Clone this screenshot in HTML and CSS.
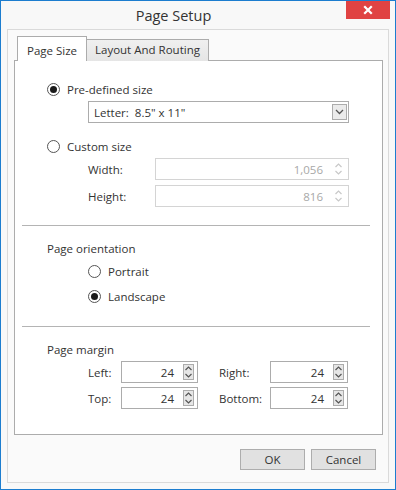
FILE: index.html
```html
<!DOCTYPE html>
<html>
<head>
<meta charset="utf-8">
<link rel="stylesheet" href="styles.css">
</head>
<body>
<div class="window">
  <div class="titlebar">
    <div class="title">Page Setup</div>
    <div class="close">
      <svg width="10" height="10" viewBox="0 0 10 10"><path d="M2 2 L8 8 M8 2 L2 8" stroke="#fff" stroke-width="2.2" stroke-linecap="square"/></svg>
    </div>
  </div>
  <div class="frame">
    <div class="tabs">
      <div class="tab active">Page Size</div>
      <div class="tab">Layout And Routing</div>
    </div>
    <div class="panel">
      <div class="section s1">
        <div class="radio-row"><span class="radio checked"></span><span>Pre-defined size</span></div>
        <div class="combo">
          <span class="combo-text">Letter:&nbsp; 8.5" x 11"</span>
          <span class="combo-btn"><svg width="9" height="6" viewBox="0 0 9 6"><path d="M1 1 L4.5 4.5 L8 1" fill="none" stroke="#555" stroke-width="1.3"/></svg></span>
        </div>
        <div class="radio-row custom"><span class="radio"></span><span>Custom size</span></div>
        <div class="field-row r1">
          <span class="field-label">Width:</span>
          <div class="input disabled"><span class="val">1,056</span><span class="spin light"><svg width="9" height="14" viewBox="0 0 9 14"><path d="M1.5 5 L4.5 2 L7.5 5 M1.5 9 L4.5 12 L7.5 9" fill="none" stroke="#c8c8c8" stroke-width="1.2"/></svg></span></div>
        </div>
        <div class="field-row r2">
          <span class="field-label">Height:</span>
          <div class="input disabled"><span class="val">816</span><span class="spin light"><svg width="9" height="14" viewBox="0 0 9 14"><path d="M1.5 5 L4.5 2 L7.5 5 M1.5 9 L4.5 12 L7.5 9" fill="none" stroke="#c8c8c8" stroke-width="1.2"/></svg></span></div>
        </div>
      </div>
      <div class="section s2">
        <div class="label-row">Page orientation</div>
        <div class="radio-row indent"><span class="radio"></span><span>Portrait</span></div>
        <div class="radio-row indent land"><span class="radio checked"></span><span>Landscape</span></div>
      </div>
      <div class="section s3">
        <div class="label-row">Page margin</div>
        <div class="margin-grid">
          <span class="m-label">Left:</span>
          <div class="input small"><span class="val">24</span><span class="spin box"><svg width="9" height="14" viewBox="0 0 9 14"><path d="M1.5 5 L4.5 2 L7.5 5 M1.5 9 L4.5 12 L7.5 9" fill="none" stroke="#555" stroke-width="1.2"/></svg></span></div>
          <span class="m-label right">Right:</span>
          <div class="input small"><span class="val">24</span><span class="spin box"><svg width="9" height="14" viewBox="0 0 9 14"><path d="M1.5 5 L4.5 2 L7.5 5 M1.5 9 L4.5 12 L7.5 9" fill="none" stroke="#555" stroke-width="1.2"/></svg></span></div>
          <span class="m-label">Top:</span>
          <div class="input small"><span class="val">24</span><span class="spin box"><svg width="9" height="14" viewBox="0 0 9 14"><path d="M1.5 5 L4.5 2 L7.5 5 M1.5 9 L4.5 12 L7.5 9" fill="none" stroke="#555" stroke-width="1.2"/></svg></span></div>
          <span class="m-label right">Bottom:</span>
          <div class="input small"><span class="val">24</span><span class="spin box"><svg width="9" height="14" viewBox="0 0 9 14"><path d="M1.5 5 L4.5 2 L7.5 5 M1.5 9 L4.5 12 L7.5 9" fill="none" stroke="#555" stroke-width="1.2"/></svg></span></div>
        </div>
      </div>
    </div>
    <div class="buttons">
      <div class="btn">OK</div>
      <div class="btn">Cancel</div>
    </div>
  </div>
</div>
</body>
</html>
```
FILE: styles.css
```css
* { box-sizing: border-box; }
html, body { margin: 0; padding: 0; }
body {
  font-family: "Open Sans", "Noto Sans", sans-serif;
  font-size: 11.5px;
  color: #333;
  background: #fff;
}
.window {
  width: 396px;
  height: 490px;
  border: 1px solid #1c7dcf;
  background: #f8f8f8;
  display: flex;
  flex-direction: column;
}
.titlebar {
  height: 28px;
  display: flex;
  flex-shrink: 0;
}
.title {
  flex: 1;
  text-align: center;
  font-size: 14.5px;
  line-height: 28px;
  color: #333;
  padding-top: 1px;
}
.close {
  width: 44px;
  height: 18px;
  background: #e04343;
  margin-right: 5px;
  display: flex;
  align-items: center;
  justify-content: center;
}
.frame {
  flex: 1;
  margin: 0 6px 6px 6px;
  border: 1px solid #dadada;
  background: #fafafa;
  padding: 6px 5px 12px 6px;
  display: flex;
  flex-direction: column;
}
.tabs {
  display: flex;
  align-items: flex-end;
  padding-left: 3px;
  height: 25px;
  position: relative;
  z-index: 1;
  margin-bottom: -1px;
}
.tab {
  height: 22px;
  border: 1px solid #acacac;
  border-bottom: none;
  background: linear-gradient(#f0f0f0, #e5e5e5);
  padding: 0 8px;
  line-height: 20px;
  color: #333;
  margin-left: -1px;
  white-space: nowrap;
}
.tab.active {
  height: 25px;
  background: #fff;
  margin-left: 0;
  width: 70px;
  line-height: 27px;
  position: relative;
  z-index: 2;
  padding: 0;
  text-align: center;
}
.panel {
  flex: 1;
  background: #fff;
  border: 1px solid #acacac;
  padding: 0 12px 0 7px;
}
.section {
  padding: 0 21px 0 25px;
}
.s1 { padding-top: 18px; padding-bottom: 18px; border-bottom: 1px solid #b4b4b4; }
.s2 { padding-top: 12px; padding-bottom: 20px; border-bottom: 1px solid #b4b4b4; }
.s3 { padding-top: 12px; }
.radio-row {
  height: 20px;
  display: flex;
  align-items: center;
}
.radio {
  width: 13px;
  height: 13px;
  border: 1px solid #555;
  border-radius: 50%;
  background: #fff;
  margin-right: 7px;
  display: flex;
  align-items: center;
  justify-content: center;
  flex-shrink: 0;
}
.radio.checked::after {
  content: "";
  width: 7px;
  height: 7px;
  border-radius: 50%;
  background: #1a1a1a;
}
.combo {
  margin: 2px 0 0 41px;
  height: 22px;
  border: 1px solid #acacac;
  display: flex;
  align-items: center;
  padding-left: 5px;
  background: #fff;
}
.combo-text { flex: 1; }
.combo-btn {
  width: 15px;
  height: 16px;
  border: 1px solid #acacac;
  background: #ebebeb;
  margin-right: 1px;
  display: flex;
  align-items: center;
  justify-content: center;
}
.radio-row.custom { margin-top: 13px; }
.field-row {
  display: flex;
  align-items: center;
  margin-left: 41px;
}
.field-row.r1 { margin-top: 2px; }
.field-row.r2 { margin-top: 5px; }
.field-label { width: 67px; }
.input {
  flex: 1;
  height: 22px;
  border: 1px solid #acacac;
  background: #fff;
  display: flex;
  align-items: center;
  justify-content: flex-end;
}
.input.disabled { border-color: #d4d4d4; color: #a8a8a8; }
.val { padding-right: 9px; }
.spin {
  width: 11px;
  height: 16px;
  margin-right: 3px;
  display: flex;
  align-items: center;
  justify-content: center;
}
.spin.light { margin-right: 4px; }
.spin.box {
  border: 1px solid #acacac;
  background: #e6e6e6;
}
.input.disabled .val { padding-right: 10px; }
.label-row {
  height: 20px;
  display: flex;
  align-items: center;
}
.radio-row.indent { margin-left: 41px; margin-top: 3px; }
.radio-row.land { margin-top: 5px; }
.margin-grid {
  margin-top: 2px;
  margin-left: 41px;
  display: grid;
  grid-template-columns: 33px 77px 21px 51px 78px;
  grid-auto-rows: 22px;
  row-gap: 4px;
  align-items: center;
}
.m-label.right { grid-column: 4; }
.input.small { width: auto; }
.buttons {
  margin-top: 14px;
  display: flex;
  justify-content: flex-end;
  gap: 6px;
  padding-right: 7px;
}
.btn {
  width: 65px;
  height: 21px;
  border: 1px solid #adadad;
  background: #e1e1e1;
  display: flex;
  align-items: center;
  justify-content: center;
  color: #333;
}
```
